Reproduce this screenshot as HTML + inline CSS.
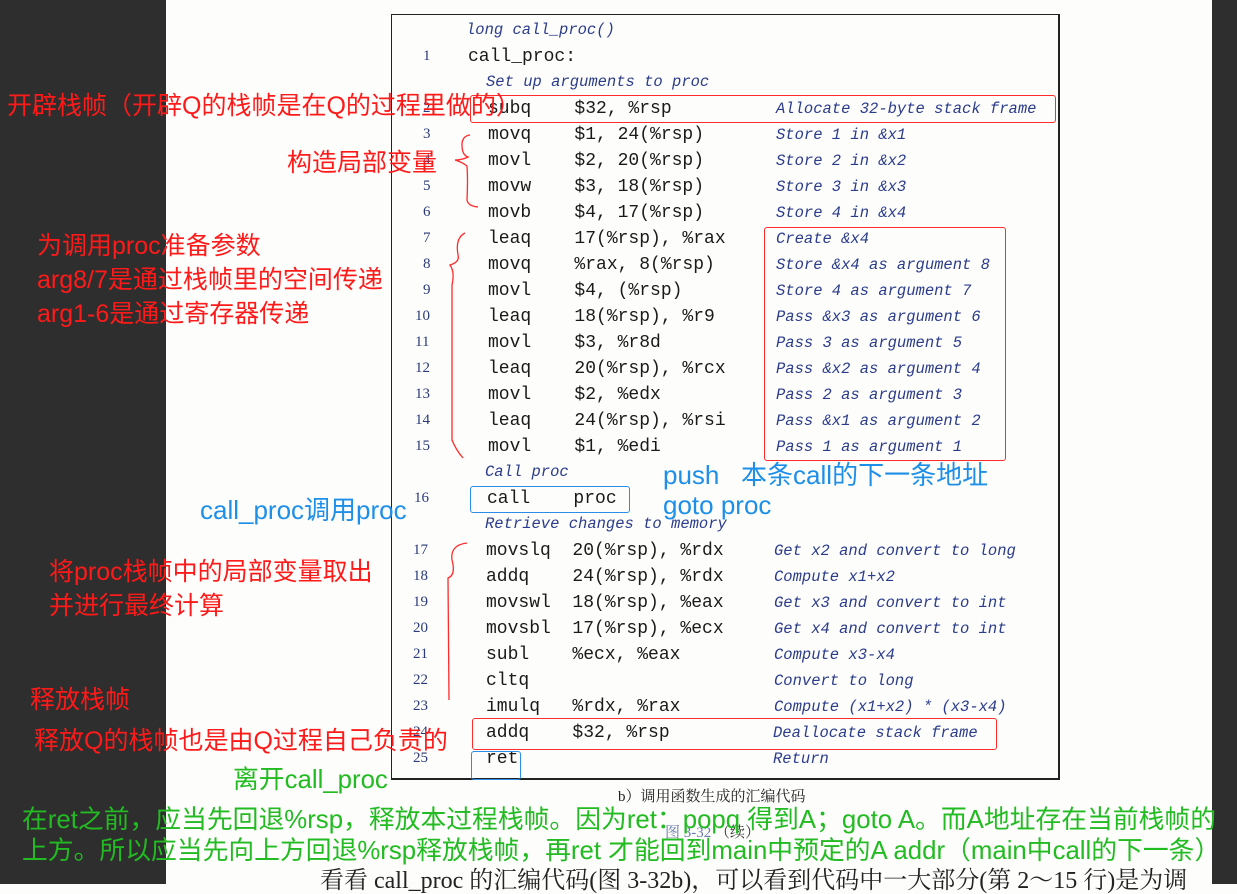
<!DOCTYPE html>
<html><head><meta charset="utf-8"><style>
*{margin:0;padding:0;box-sizing:border-box}
body{width:1237px;height:884px;overflow:hidden;background:#fdfdfb;position:relative;font-family:"Liberation Sans","Noto Sans CJK SC",sans-serif}
.l{position:absolute;left:0;top:0;width:166px;height:884px;background:#2e2e2e}
.r{position:absolute;left:1212px;top:0;width:25px;height:884px;background:#2e2e2e}
.box{position:absolute;left:391px;top:14px;width:669px;height:766px;border:1.5px solid #222;border-right:2px solid #222;border-bottom:2px solid #222}
.t{position:absolute;white-space:pre;line-height:1}
.c{font-family:"Liberation Mono",monospace;font-size:18px;color:#1a1a1a}
.n{font-family:"Liberation Serif",serif;font-size:15px;color:#2a3a7a}
.cm{font-family:"Liberation Mono",monospace;font-style:italic;font-size:15.5px;color:#2b3c8c}
.red{color:#ff1a1a;font-family:"Liberation Sans","Noto Sans CJK SC",sans-serif;font-size:25px}
.blue{color:#1e8fe8;font-family:"Liberation Sans","Noto Sans CJK SC",sans-serif;font-size:26px}
.grn{color:#22bb22;font-family:"Liberation Sans","Noto Sans CJK SC",sans-serif;font-size:25.8px}
.rb{position:absolute;border:1.3px solid #ff2a2a;border-radius:3px}
.bb{position:absolute;border:1.3px solid #2a8ee8;border-radius:3px}
</style></head><body>
<div class="l"></div><div class="r"></div>
<div class="box"></div>

<div class="t cm" style="left:466px;top:23px">long call_proc()</div>
<div class="t n" style="left:423px;top:49px">1</div>
<div class="t c" style="left:468px;top:48px">call_proc:</div>
<div class="t cm" style="left:486px;top:75px">Set up arguments to proc</div>

<div class="t n" style="left:423px;top:101px">2</div><div class="t c" style="left:488px;top:100px">subq    $32, %rsp</div><div class="t cm" style="left:776px;top:102px">Allocate 32-byte stack frame</div>
<div class="t n" style="left:423px;top:127px">3</div><div class="t c" style="left:488px;top:126px">movq    $1, 24(%rsp)</div><div class="t cm" style="left:776px;top:128px">Store 1 in &amp;x1</div>
<div class="t n" style="left:423px;top:153px">4</div><div class="t c" style="left:488px;top:152px">movl    $2, 20(%rsp)</div><div class="t cm" style="left:776px;top:154px">Store 2 in &amp;x2</div>
<div class="t n" style="left:423px;top:179px">5</div><div class="t c" style="left:488px;top:178px">movw    $3, 18(%rsp)</div><div class="t cm" style="left:776px;top:180px">Store 3 in &amp;x3</div>
<div class="t n" style="left:423px;top:205px">6</div><div class="t c" style="left:488px;top:204px">movb    $4, 17(%rsp)</div><div class="t cm" style="left:776px;top:206px">Store 4 in &amp;x4</div>
<div class="t n" style="left:423px;top:231px">7</div><div class="t c" style="left:488px;top:230px">leaq    17(%rsp), %rax</div><div class="t cm" style="left:776px;top:232px">Create &amp;x4</div>
<div class="t n" style="left:423px;top:257px">8</div><div class="t c" style="left:488px;top:256px">movq    %rax, 8(%rsp)</div><div class="t cm" style="left:776px;top:258px">Store &amp;x4 as argument 8</div>
<div class="t n" style="left:423px;top:283px">9</div><div class="t c" style="left:488px;top:282px">movl    $4, (%rsp)</div><div class="t cm" style="left:776px;top:284px">Store 4 as argument 7</div>
<div class="t n" style="left:415px;top:309px">10</div><div class="t c" style="left:488px;top:308px">leaq    18(%rsp), %r9</div><div class="t cm" style="left:776px;top:310px">Pass &amp;x3 as argument 6</div>
<div class="t n" style="left:415px;top:335px">11</div><div class="t c" style="left:488px;top:334px">movl    $3, %r8d</div><div class="t cm" style="left:776px;top:336px">Pass 3 as argument 5</div>
<div class="t n" style="left:415px;top:361px">12</div><div class="t c" style="left:488px;top:360px">leaq    20(%rsp), %rcx</div><div class="t cm" style="left:776px;top:362px">Pass &amp;x2 as argument 4</div>
<div class="t n" style="left:415px;top:387px">13</div><div class="t c" style="left:488px;top:386px">movl    $2, %edx</div><div class="t cm" style="left:776px;top:388px">Pass 2 as argument 3</div>
<div class="t n" style="left:415px;top:413px">14</div><div class="t c" style="left:488px;top:412px">leaq    24(%rsp), %rsi</div><div class="t cm" style="left:776px;top:414px">Pass &amp;x1 as argument 2</div>
<div class="t n" style="left:415px;top:439px">15</div><div class="t c" style="left:488px;top:438px">movl    $1, %edi</div><div class="t cm" style="left:776px;top:440px">Pass 1 as argument 1</div>
<div class="t cm" style="left:485px;top:465px">Call proc</div>
<div class="t n" style="left:414px;top:491px">16</div><div class="t c" style="left:487px;top:490px">call    proc</div>
<div class="t cm" style="left:485px;top:517px">Retrieve changes to memory</div>
<div class="t n" style="left:413px;top:543px">17</div><div class="t c" style="left:486px;top:542px">movslq  20(%rsp), %rdx</div><div class="t cm" style="left:774px;top:544px">Get x2 and convert to long</div>
<div class="t n" style="left:413px;top:569px">18</div><div class="t c" style="left:486px;top:568px">addq    24(%rsp), %rdx</div><div class="t cm" style="left:774px;top:570px">Compute x1+x2</div>
<div class="t n" style="left:413px;top:595px">19</div><div class="t c" style="left:486px;top:594px">movswl  18(%rsp), %eax</div><div class="t cm" style="left:774px;top:596px">Get x3 and convert to int</div>
<div class="t n" style="left:413px;top:621px">20</div><div class="t c" style="left:486px;top:620px">movsbl  17(%rsp), %ecx</div><div class="t cm" style="left:774px;top:622px">Get x4 and convert to int</div>
<div class="t n" style="left:413px;top:647px">21</div><div class="t c" style="left:486px;top:646px">subl    %ecx, %eax</div><div class="t cm" style="left:774px;top:648px">Compute x3-x4</div>
<div class="t n" style="left:413px;top:673px">22</div><div class="t c" style="left:486px;top:672px">cltq</div><div class="t cm" style="left:774px;top:674px">Convert to long</div>
<div class="t n" style="left:413px;top:699px">23</div><div class="t c" style="left:486px;top:698px">imulq   %rdx, %rax</div><div class="t cm" style="left:774px;top:700px">Compute (x1+x2) * (x3-x4)</div>
<div class="t n" style="left:413px;top:725px">24</div><div class="t c" style="left:486px;top:724px">addq    $32, %rsp</div><div class="t cm" style="left:773px;top:726px">Deallocate stack frame</div>
<div class="t n" style="left:413px;top:751px">25</div><div class="t c" style="left:486px;top:750px">ret</div><div class="t cm" style="left:773px;top:752px">Return</div>

<div class="rb" style="left:470px;top:95px;width:586px;height:28px"></div>
<div class="rb" style="left:764px;top:227px;width:242px;height:234px"></div>
<div class="rb" style="left:472px;top:718px;width:525px;height:32px"></div>
<div class="bb" style="left:470px;top:486px;width:160px;height:27px"></div>
<div class="bb" style="left:471px;top:751px;width:50px;height:29px"></div>

<svg style="position:absolute;left:0;top:0" width="1237" height="884">
<g fill="none" stroke="#ff2a2a" stroke-width="1.3">
<path d="M470 135 Q462 136 462 145 Q462 155 468 157 Q462 160 455 160 Q462 162 467 166 Q468 180 467 200 Q468 206 478 207"/>
<path d="M465 233 Q455 238 458 255 Q460 262 450 265 Q455 272 452 285 L452 440 Q456 450 463 458"/>
<path d="M467 543 Q450 545 452 560 Q456 575 448 578 L449 700"/>
</g></svg>

<div class="t red" style="left:7px;top:94px">开辟栈帧（开辟Q的栈帧是在Q的过程里做的）</div>
<div class="t red" style="left:287px;top:151px">构造局部变量</div>
<div class="t red" style="left:37px;top:229px;line-height:34px">为调用proc准备参数<br>arg8/7是通过栈帧里的空间传递<br>arg1-6是通过寄存器传递</div>
<div class="t red" style="left:49px;top:555px;line-height:34px">将proc栈帧中的局部变量取出<br>并进行最终计算</div>
<div class="t red" style="left:30px;top:688px">释放栈帧</div>
<div class="t red" style="left:34px;top:729px">释放Q的栈帧也是由Q过程自己负责的</div>

<div class="t blue" style="left:663px;top:462px">push&nbsp;&nbsp;&nbsp;本条call的下一条地址</div>
<div class="t blue" style="left:663px;top:492px">goto proc</div>
<div class="t blue" style="left:200px;top:497px">call_proc调用proc</div>

<div class="t" style="left:618px;top:790px;font-size:15px;color:#222;font-family:'Liberation Serif','Noto Serif CJK SC',serif">b）调用函数生成的汇编代码</div>
<div class="t" style="left:665px;top:826px;font-size:15px;color:#6a7ab0;font-family:'Liberation Serif','Noto Serif CJK SC',serif">图 3-32 <span style="color:#333">（续）</span></div>

<div class="t grn" style="left:233px;top:768px">离开call_proc</div>
<div class="t grn" style="left:22px;top:808px">在ret之前，应当先回退%rsp，释放本过程栈帧。因为ret：popq 得到A；goto A。而A地址存在当前栈帧的</div>
<div class="t grn" style="left:22px;top:839px">上方。所以应当先向上方回退%rsp释放栈帧，再ret 才能回到main中预定的A addr（main中call的下一条）</div>

<div class="t" style="left:320px;top:869px;font-size:24px;color:#222;font-family:'Liberation Serif','Noto Serif CJK SC',serif">看看 call_proc 的汇编代码(图 3-32b)，可以看到代码中一大部分(第 2～15 行)是为调</div>
</body></html>
